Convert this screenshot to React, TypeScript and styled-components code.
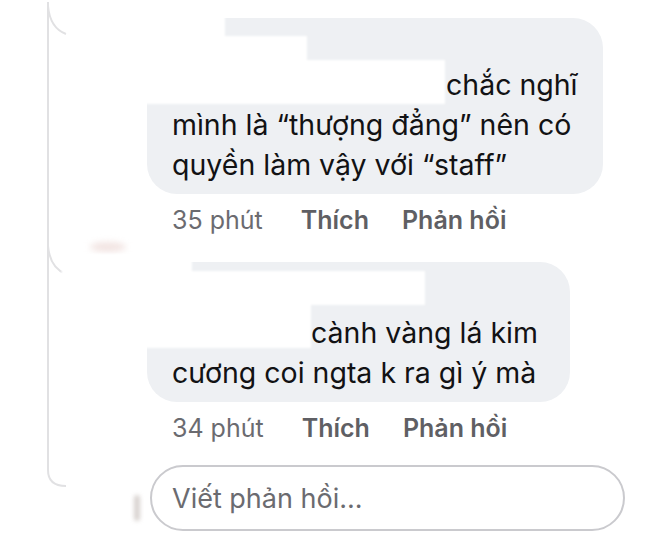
import styled, { createGlobalStyle } from "styled-components";

const GlobalStyle = createGlobalStyle`
  html, body {
    margin: 0;
    padding: 0;
    background: #ffffff;
  }
  body {
    font-family: Inter, "Noto Sans", "Liberation Sans", sans-serif;
    -webkit-font-smoothing: antialiased;
  }
`;

type Patch = { left: number; top: number; width: number; height: number };

type CommentData = {
  nameWidth: number;
  nameHeight: number;
  first: string;
  rest: string;
  time: string;
  width: number;
  patches: Patch[];
};

// names are whited out in the source screenshot
const comments: CommentData[] = [
  {
    nameWidth: 266,
    nameHeight: 37,
    first: "chắc nghĩ",
    rest: "mình là “thượng đẳng” nên có\nquyền làm vậy với “staff”",
    time: "35 phút",
    width: 456,
    patches: [
      { left: -80, top: -20, width: 158, height: 64 },
      { left: -30, top: 18, width: 190, height: 40 },
      { left: -18, top: 42, width: 316, height: 44 },
    ],
  },
  {
    nameWidth: 131,
    nameHeight: 41,
    first: "cành vàng lá kim",
    rest: "cương coi ngta k ra gì ý mà",
    time: "34 phút",
    width: 423,
    patches: [
      { left: -85, top: -8, width: 130, height: 22 },
      { left: -85, top: 9, width: 363, height: 34 },
      { left: -6, top: 34, width: 170, height: 52 },
    ],
  },
];

const ThreadConnector = () => (
  <Connector width="80" height="547" viewBox="0 0 80 547">
    <path d="M48 2 V470 Q48 486 66 486" />
    <path d="M48 6 Q50 28 66 34" />
    <path d="M48 246 Q50 268 66 274" />
  </Connector>
);

const App = () => {
  return (
    <>
      <GlobalStyle />
      <Thread>
        <ThreadConnector />
        {comments.map((c, i) => (
          <Comment key={i} $first={i === 0}>
            <AvatarSlot>
              <AvatarSmudge $tone={i === 1 ? "#f2e4e2" : "#f4f4f4"} />
            </AvatarSlot>
            <Body>
              <Bubble $width={c.width}>
                <NameLine $height={c.nameHeight} />
                <BubbleText>
                  <HiddenName $width={c.nameWidth} /> {c.first}
                  {"\n"}
                  {c.rest}
                </BubbleText>
                {c.patches.map((p, j) => (
                  <Redaction
                    key={j}
                    style={{
                      left: p.left,
                      top: p.top,
                      width: p.width,
                      height: p.height,
                    }}
                  />
                ))}
              </Bubble>
              <Meta>
                <MetaTime>{c.time}</MetaTime>
                <MetaAction $gap={38}>Thích</MetaAction>
                <MetaAction $gap={33}>Phản hồi</MetaAction>
              </Meta>
            </Body>
          </Comment>
        ))}
        <ReplyRow>
          <AvatarSlot>
            <ReplyAvatarEdge />
          </AvatarSlot>
          <ReplyInput>Viết phản hồi...</ReplyInput>
        </ReplyRow>
      </Thread>
    </>
  );
};

const Thread = styled.div`
  position: relative;
  width: 660px;
  height: 547px;
  overflow: hidden;
  padding-top: 18px;
  box-sizing: border-box;
`;

const Connector = styled.svg`
  position: absolute;
  left: 0;
  top: 0;
  fill: none;
  stroke: #e1e1e3;
  stroke-width: 2;
`;

const Comment = styled.div<{ $first?: boolean }>`
  display: grid;
  grid-template-columns: 147px 1fr;
  margin-top: ${({ $first }) => ($first ? "0" : "27px")};
`;

const AvatarSlot = styled.div`
  position: relative;
`;

const AvatarSmudge = styled.div<{ $tone: string }>`
  position: absolute;
  left: 90px;
  top: -20px;
  width: 36px;
  height: 10px;
  border-radius: 50%;
  background: ${({ $tone }) => $tone};
  filter: blur(3px);
`;

const Body = styled.div`
  display: flex;
  flex-direction: column;
  align-items: flex-start;
`;

const Bubble = styled.div<{ $width: number }>`
  position: relative;
  width: ${({ $width }) => $width}px;
  box-sizing: border-box;
  padding: 10px 20px 9px 25px;
  background: #eef0f3;
  border-radius: 30px;
`;

const NameLine = styled.div<{ $height: number }>`
  height: ${({ $height }) => $height}px;
`;

const BubbleText = styled.div`
  font-size: 28.5px;
  line-height: 40px;
  color: #121214;
  white-space: pre-line;
`;

const HiddenName = styled.span<{ $width: number }>`
  display: inline-block;
  width: ${({ $width }) => $width}px;
  height: 1px;
`;

const Redaction = styled.div`
  position: absolute;
  background: #ffffff;
  filter: blur(1px);
`;

const Meta = styled.div`
  display: flex;
  margin-top: 11px;
  padding-left: 25px;
  font-size: 25px;
  line-height: 30px;
`;

const MetaTime = styled.span`
  color: #6b6b70;
`;

const MetaAction = styled.span<{ $gap: number }>`
  margin-left: ${({ $gap }) => $gap}px;
  color: #5f5f64;
  font-weight: 600;
`;

const ReplyRow = styled.div`
  display: grid;
  grid-template-columns: 150px 475px;
  margin-top: 22px;
`;

const ReplyAvatarEdge = styled.div`
  position: absolute;
  right: 10px;
  top: 30px;
  width: 6px;
  height: 26px;
  background: #d8d2cf;
  border-radius: 3px;
  filter: blur(2px);
`;

const ReplyInput = styled.div`
  height: 66px;
  box-sizing: border-box;
  border: 2px solid #cacace;
  border-radius: 33px;
  padding-left: 20px;
  display: flex;
  align-items: center;
  font-size: 27px;
  color: #6b6b70;
`;

export default App;
